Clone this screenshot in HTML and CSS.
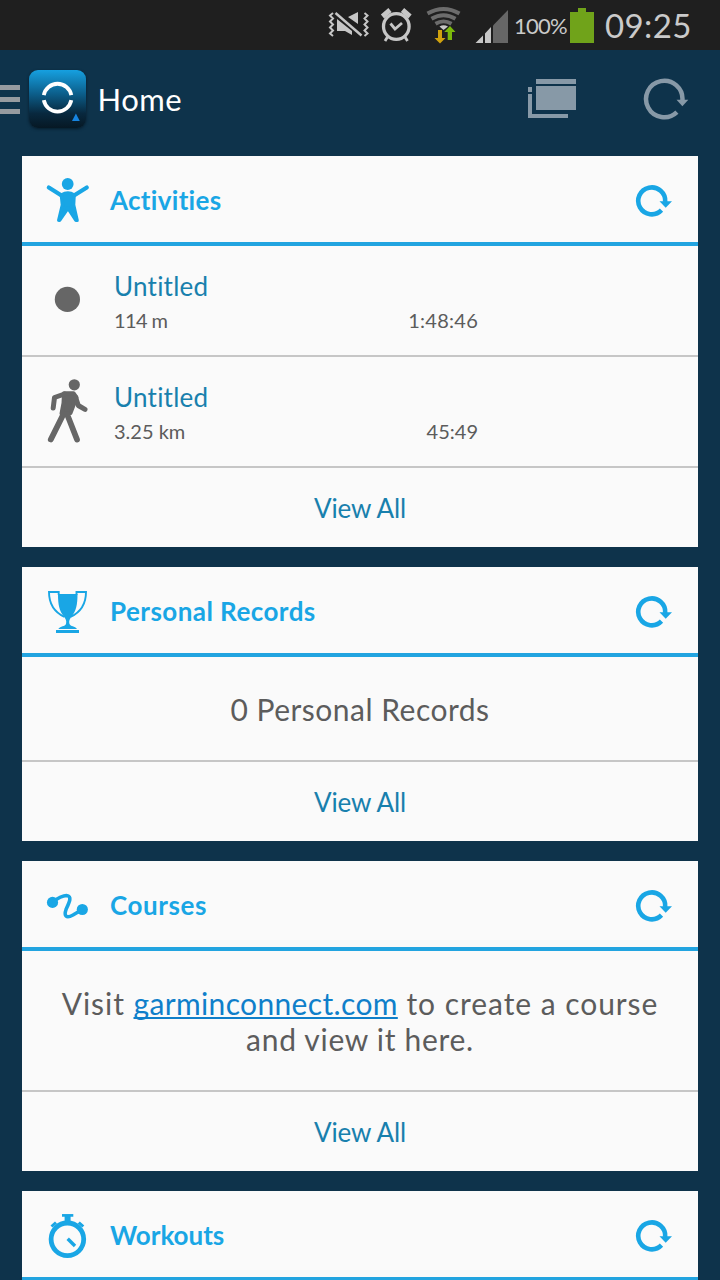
FILE: index.html
```html
<!DOCTYPE html>
<html lang="en">
<head>
<meta charset="utf-8">
<title>Home</title>
<link rel="stylesheet" href="styles.css">
</head>
<body>
<svg class="defs" aria-hidden="true">
  <symbol id="refresh" viewBox="0 0 40 40">
    <path d="M27.500 30.200A13.500 13.500 0 1 1 31.200 22" fill="none" stroke="currentColor" stroke-width="4.600"/>
    <path d="M25.500 21.200H38L31.700 27.800Z" fill="currentColor"/>
  </symbol>
</svg>

<div class="status">
  <svg class="s-mute" width="44" height="50" viewBox="326 0 44 50" fill="none" stroke="#c6c6c6" stroke-width="2">
    <path d="M333 13l-3 2.500 3 3-3 3 3 3-3 3 3 3-3 3 3 2.500M364.500 13l3 2.500-3 3 3 3-3 3 3 3-3 3 3 3-3 2.500"/>
    <path d="M337 20v11h8l7 4v-4l-15-12zM348 17l10-5v12z" fill="#c6c6c6" stroke="none"/>
    <path d="M335.500 13l26 22.500" stroke-width="2.400"/>
    <path d="M338 11l24 21" stroke="#1f1f1f" stroke-width="1.500"/>
  </svg>
  <svg class="s-alarm" width="34" height="50" viewBox="379 0 34 50" fill="none" stroke="#c6c6c6">
    <circle cx="396.300" cy="26.500" r="12.800" stroke-width="3.300"/>
    <path d="M390.500 23.500l4.500 5.500 7-6" stroke-width="2.800"/>
    <path d="M382.500 16.500l7.500-6.500M402.500 10l7.500 6.500" stroke-width="5"/>
    <path d="M387.500 37l-2.500 4M405 37l2.500 4" stroke-width="2.800"/>
  </svg>
  <svg class="s-wifi" width="36" height="50" viewBox="426 0 36 50" fill="none" stroke="#6c6c6c" stroke-width="3.900">
    <path d="M427.500 13.500Q443.500 4.500 459.500 13.500M431.500 18.700Q443.500 11.700 455.500 18.700M435.500 23.700Q443.500 19 451.500 23.700"/>
    <path d="M439.500 26.500q4-2.500 8.500 0l-4.500 3.500z" fill="#c6c6c6" stroke="none"/>
    <path d="M438 30h4v8h3.500l-5.500 5.500-5.500-5.500h3.500z" fill="#d0a20e" stroke="none"/>
    <path d="M447.700 40v-8h-3.500l5.800-6 5.500 6h-3.500v8z" fill="#7bb80b" stroke="none"/>
  </svg>
  <svg class="s-signal" width="34" height="50" viewBox="475 0 34 50">
    <path d="M475.500 43l7.500-7.500v7.500zM485 43v-9.500l6-6.500v16z" fill="#c6c6c6"/>
    <path d="M493 43v-17.500l15-15.500v33z" fill="#666"/>
  </svg>
  <span class="percent">100%</span>
  <span class="battery"></span>
  <span class="clock">09:25</span>
</div>

<header class="bar">
  <div class="menu"><i></i><i></i><i></i></div>
  <div class="logo">
    <svg width="57" height="58" viewBox="28.500 70 57 58" fill="none" stroke="#fff" stroke-width="3.800">
      <path d="M43.300 95.100A14 14 0 0 1 70.800 95.100M43.300 100.200A14 14 0 0 0 70.800 100.200"/>
      <path d="M71.500 121l3.900-7.500 3.900 7.500z" fill="#1684e0" stroke="none"/>
    </svg>
  </div>
  <h1>Home</h1>
  <svg class="windows" width="50" height="42" viewBox="527 78 50 42" fill="#8799a7">
    <path d="M536 79h40v5h-40zM536 86h40v24h-40zM528 87h4v5h-4zM528 94h4v20h36v4h-40z"/>
  </svg>
  <svg class="reload" width="48" height="44" viewBox="642 77 48 44">
    <path d="M676.900 112.100A18.200 18.200 0 1 1 682.400 100.600" fill="none" stroke="#8799a7" stroke-width="4.500"/>
    <path d="M676.500 99.800h11.800l-5.900 6.500z" fill="#8799a7"/>
  </svg>
</header>

<main class="cards">
  <section class="card">
    <div class="head">
      <svg width="48" height="56" viewBox="0 0 48 56" fill="#19a6e5" stroke="#19a6e5" stroke-linecap="round" stroke-linejoin="round">
        <circle cx="23.700" cy="13" r="5.900" stroke="none"/>
        <path d="M4.800 16.500L17.500 24.500M42.800 16.500L30 24.500" stroke-width="4.200"/>
        <path d="M17.500 24Q24 20 30 24L29.500 34 33 49.300H32L24 37 15.500 49.300H14.800L18.500 34Z" stroke-width="3.600"/>
      </svg>
      <h2 class="t-act">Activities</h2>
      <svg class="sync" width="40" height="40"><use href="#refresh"/></svg>
    </div>
    <div class="row">
      <svg width="48" height="72" viewBox="0 0 48 72"><circle cx="23.400" cy="34.400" r="12.600" fill="#666"/></svg>
      <div class="info"><span class="name">Untitled</span><span class="dist d1">114 m</span></div>
      <span class="time tm1">1:48:46</span>
    </div>
    <div class="row">
      <svg width="48" height="72" viewBox="0 0 48 72" fill="none" stroke="#666" stroke-linecap="round" stroke-linejoin="round">
        <circle cx="30.300" cy="8.800" r="5.600" fill="#666" stroke="none"/>
        <path d="M20 17.200H29.500L32.500 21.500 26.500 37 17.500 37.500 19.500 27Z" fill="#666" stroke-width="4"/>
        <path d="M20.500 18L10.500 21.500 9.200 32M31.500 21L34.300 29.500 41 33.400" stroke-width="5"/>
        <path d="M19.500 38L6.800 63.500M23 38L33 63.500" stroke-width="5.800"/>
      </svg>
      <div class="info"><span class="name">Untitled</span><span class="dist d2">3.25 km</span></div>
      <span class="time tm2">45:49</span>
    </div>
    <a class="all">View All</a>
  </section>

  <section class="card">
    <div class="head">
      <svg width="48" height="56" viewBox="0 0 48 56" fill="#19a6e5">
        <path d="M14 12H33.500C33.500 23 32 29 28 34 25 38 25 39 25.500 42 26.500 44.500 31 44 33 47H14.300C16.500 44 21 44.500 22 42 22.500 39 22.500 38 19.500 34 15.500 29 14 23 14 12Z"/>
        <path d="M12 48H35V51H12Z"/>
        <path d="M14.700 13V10H5C5 20 9 29.500 20.500 35M32.500 13V10H42C42 20 38 29.500 26.500 35" fill="none" stroke="#19a6e5" stroke-width="1.900"/>
      </svg>
      <h2 class="t-rec">Personal Records</h2>
      <svg class="sync" width="40" height="40"><use href="#refresh"/></svg>
    </div>
    <p class="body records"><span>0 Personal Records</span></p>
    <a class="all">View All</a>
  </section>

  <section class="card">
    <div class="head">
      <svg width="48" height="56" viewBox="0 0 48 56" fill="#19a6e5">
        <circle cx="8.500" cy="26.400" r="5.600"/><circle cx="38.300" cy="33.500" r="5.600"/>
        <path d="M8.500 26C14 22 18 19.500 22.500 19.500 29 20 24.500 28 22.200 33 19.500 40.500 22.500 42.500 29 39L38.300 33.500" fill="none" stroke="#19a6e5" stroke-width="3.600"/>
      </svg>
      <h2 class="t-crs">Courses</h2>
      <svg class="sync" width="40" height="40"><use href="#refresh"/></svg>
    </div>
    <p class="body visit"><span class="l1">Visit <a class="link">garminconnect.com</a> to create a course</span><span class="l2">and view it here.</span></p>
    <a class="all">View All</a>
  </section>

  <section class="card">
    <div class="head">
      <svg width="48" height="56" viewBox="0 0 48 56" fill="none" stroke="#19a6e5">
        <circle cx="23.400" cy="33.300" r="16.300" stroke-width="4.800"/>
        <path d="M18 9.400H29.300" stroke-width="2.700"/><path d="M23.600 10V17" stroke-width="6"/>
        <path d="M7.500 20.500L12 16.500M39.300 20.500L34.800 16.500" stroke-width="3"/>
        <path d="M23.700 32.700L31 40" stroke-width="3.400"/>
      </svg>
      <h2 class="t-wrk">Workouts</h2>
      <svg class="sync" width="40" height="40"><use href="#refresh"/></svg>
    </div>
  </section>
</main>
</body>
</html>
```
FILE: styles.css
```css
* { box-sizing: border-box; }
body {
  margin: 0;
  height: 1280px;
  overflow: hidden;
  background: #0e334b;
  font-family: Lato, "Open Sans", sans-serif;
  font-variant-ligatures: none;
  white-space: nowrap;
}
svg { display: block; flex: none; }
.defs { display: none; }
h1, h2, p { margin: 0; font-weight: 400; }

.status {
  display: flex;
  align-items: center;
  height: 50px;
  padding-left: 326px;
  background: #1f1f1f;
  color: #cacaca;
}
.s-alarm { margin-left: 9px; }
.s-wifi { margin-left: 13px; }
.s-signal { margin-left: 13px; }
.percent { width: 56px; margin-left: 5px; font-size: 22px; letter-spacing: -0.8px; }
.battery {
  width: 24px;
  height: 35px;
  margin-top: 1px;
  background: #70a31a;
  clip-path: polygon(0 4px, 8px 4px, 8px 0, 16px 0, 16px 4px, 100% 4px, 100% 100%, 0 100%);
}
.clock { margin-left: 11px; font-size: 33px; letter-spacing: 0.4px; }

.bar {
  display: flex;
  align-items: center;
  height: 98px;
  color: #fff;
}
.menu { display: grid; gap: 7px; width: 20px; }
.menu i { height: 5px; background: #969ba0; }
.logo {
  margin-left: 8.5px;
  border-radius: 9px;
  background: linear-gradient(#16a0e0, #0c608d 40%, #08283e 75%, #061824);
  box-shadow: 0 1px 3px #061c2b;
}
.bar h1 { width: 429px; margin-left: 12px; font-size: 31px; letter-spacing: 0.5px; }
.reload { margin-left: 65px; }

.cards { display: grid; gap: 20px; padding: 8px 22px 0; }
.card { background: #fafafa; }
.head {
  display: flex;
  align-items: center;
  height: 90px;
  padding: 0 24px 0 22px;
  border-bottom: 4px solid #22a4e0;
  color: #19a6e5;
}
.head h2 { margin: 2px 0 0 18px; font-size: 26px; font-weight: 700; }
.t-act { letter-spacing: 0.3px; }
.t-rec { letter-spacing: 0.45px; }
.t-crs { letter-spacing: 0.6px; }
.sync { margin: 2px 0 0 auto; }
.row {
  display: flex;
  align-items: center;
  height: 111px;
  padding: 0 220px 0 22px;
  border-bottom: 2px solid #c6c6c6;
  color: #5c5c5c;
  font-size: 20px;
}
.info { display: grid; gap: 2px; margin: 5px 0 0 22px; }
.name { color: #1880ad; font-size: 26px; line-height: 32px; letter-spacing: 0.25px; }
.dist { line-height: 32px; }
.d1 { letter-spacing: -0.6px; }
.time { margin: 39px 0 0 auto; line-height: 32px; }
.tm1 { letter-spacing: 0.25px; }
.all {
  display: flex;
  align-items: center;
  justify-content: center;
  height: 79px;
  color: #1880ad;
  font-size: 26px;
  letter-spacing: -0.1px;
}
.body {
  display: flex;
  flex-direction: column;
  align-items: center;
  justify-content: center;
  border-bottom: 2px solid #c6c6c6;
  color: #5c5c5c;
  font-size: 30px;
  line-height: 36px;
}
.records { height: 105px; letter-spacing: 0.5px; }
.visit { height: 141px; }
.l1 { letter-spacing: 0.95px; }
.l2 { letter-spacing: 0.7px; }
.link {
  color: #0f7fca;
  letter-spacing: 0.35px;
  text-decoration: underline;
  text-decoration-thickness: 2px;
  text-underline-offset: 2px;
  text-decoration-skip-ink: none;
}
```
